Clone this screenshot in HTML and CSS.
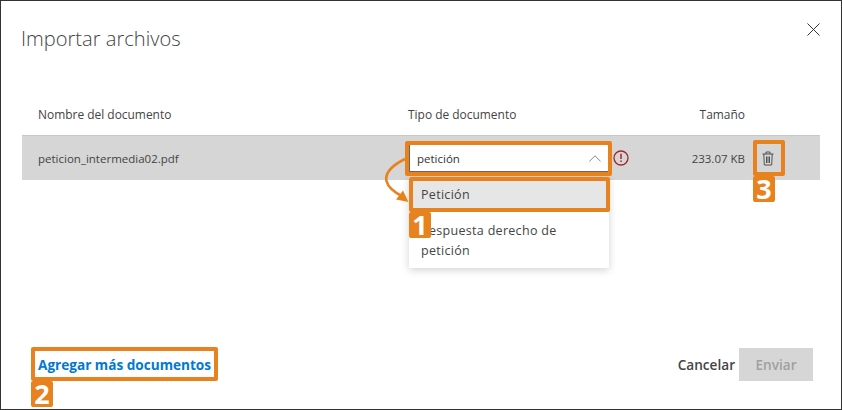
FILE: index.html
```html
<!DOCTYPE html>
<html lang="es">
<head>
<meta charset="utf-8">
<title>Importar archivos</title>
<link rel="stylesheet" href="styles.css">
</head>
<body>
<div class="dialog">
  <header class="head">
    <h1 class="title">Importar archivos</h1>
    <button class="close" aria-label="Cerrar">
      <svg width="13" height="13" viewBox="0 0 13 13"><path d="M.5.5l12 12M12.5.5l-12 12" stroke="#333" stroke-width="1" fill="none"/></svg>
    </button>
  </header>
  <div class="table">
    <div class="cols thead">
      <div class="c-name">Nombre del documento</div>
      <div class="c-type">Tipo de documento</div>
      <div class="c-size">Tamaño</div>
      <div class="c-act"></div>
    </div>
    <div class="cols row">
      <div class="c-name">peticion_intermedia02.pdf</div>
      <div class="c-type type-cell">
        <div class="select">
          <span>petición</span>
          <svg width="12" height="7" viewBox="0 0 12 7"><path d="M.3 6.500L6 .8l5.700 5.700" stroke="#888" fill="none"/></svg>
        </div>
        <svg class="err" width="16" height="16" viewBox="0 0 16 16"><circle cx="8" cy="8" r="7" stroke="#a4262c" stroke-width="1.300" fill="none"/><path d="M8 3.800v5.200" stroke="#a4262c" stroke-width="1.500"/><path d="M8 10.400v1.600" stroke="#a4262c" stroke-width="1.500"/></svg>
        <ul class="menu">
          <li class="opt active">Petición</li>
          <li class="opt">Respuesta derecho de petición</li>
        </ul>
      </div>
      <div class="c-size">233.07 KB</div>
      <div class="c-act">
        <svg width="12" height="15" viewBox="0 0 12 15"><path d="M.5 3h11M4 3V1h4v2M1.800 3l.5 11h7.400l.5-11M4.500 5.500v6.500M6 5.500v6.500M7.500 5.500v6.500" stroke="#444" stroke-width=".9" fill="none"/></svg>
      </div>
    </div>
  </div>
  <footer class="foot">
    <a class="add" href="#">Agregar más documentos</a>
    <div class="actions">
      <button class="cancel">Cancelar</button>
      <button class="send" disabled>Enviar</button>
    </div>
  </footer>

  <div class="mark m-select"></div>
  <div class="mark m-option"></div>
  <div class="mark m-trash"></div>
  <div class="mark m-add"></div>
  <div class="badge b-1">1</div>
  <div class="badge b-2">2</div>
  <div class="badge b-3">3</div>
  <svg class="arrow" width="34" height="50" viewBox="0 0 34 50"><path d="M22 3C8 10 2 18 3.500 25c1.500 7 9 12 17 16" stroke="#e8821e" stroke-width="2.600" fill="none"/><path d="M13 43.500L25.500 46 20 34.500z" fill="#e8821e"/></svg>
</div>
</body>
</html>
```
FILE: styles.css
```css
* { box-sizing: border-box; }
html, body { margin: 0; padding: 0; }
body {
  width: 842px;
  height: 410px;
  font-family: "Open Sans", "Liberation Sans", sans-serif;
  color: #333;
  overflow: hidden;
}
.dialog {
  position: relative;
  width: 842px;
  height: 410px;
  border: 1px solid #333;
  background: #fff;
  display: flex;
  flex-direction: column;
}
.head {
  display: flex;
  justify-content: space-between;
  padding: 22px 21px 0 20px;
  height: 102px;
}
.title {
  margin: 0;
  font-size: 20.100px;
  font-weight: 300;
  line-height: 32px;
  color: #444;
}
.close {
  border: 0;
  background: none;
  padding: 0;
  height: 13px;
  line-height: 0;
}
.table { margin: 0 21px; }
.cols {
  display: grid;
  grid-template-columns: 370px 262px 75px 1fr;
  padding-left: 16px;
  font-size: 11.500px;
  align-items: center;
}
.thead {
  height: 33px;
  font-weight: 500;
  color: #444;
  font-size: 11.950px;
  border-bottom: 1px solid #c8c8c8;
  padding-bottom: 9px;
}
.row {
  height: 44px;
  background: #d6d6d6;
  color: #444;
}
.c-size { text-align: right; }
.c-act { display: flex; justify-content: flex-end; padding-right: 46px; line-height: 0; }
.type-cell {
  position: relative;
  display: flex;
  align-items: center;
  gap: 4px;
}
.select {
  width: 200px;
  height: 28px;
  margin-left: 1px;
  background: #fff;
  border: 1px solid #666;
  display: flex;
  align-items: center;
  justify-content: space-between;
  padding: 0 7px 0 7px;
  color: #333;
}
.menu {
  position: absolute;
  left: 1px;
  top: 33px;
  width: 200px;
  margin: 0;
  padding: 0;
  list-style: none;
  background: #fff;
  box-shadow: 0 2px 8px rgba(0,0,0,.18);
  font-size: 12.500px;
  line-height: 20px;
  letter-spacing: .3px;
  color: #444;
}
.opt.active { background: #e6e6e6; padding: 8px 12px 7px; }
.opt:not(.active) { padding: 9px 12px 7px; }
.foot {
  margin-top: auto;
  display: flex;
  justify-content: space-between;
  align-items: center;
  padding: 0 28px 28px 37px;
  height: 61px;
}
.add {
  font-size: 13.600px;
  font-weight: 700;
  color: #0078d4;
  text-decoration: none;
}
.actions { display: flex; align-items: center; gap: 4px; }
.actions button {
  font-family: inherit;
  font-size: 13.600px;
  font-weight: 600;
  border: 0;
  padding: 0;
  height: 33px;
}
.cancel { background: none; color: #444; }
.send { width: 74px; background: #d6d6d6; color: #a0a0a0; }
.mark {
  position: absolute;
  border: 4px solid #e8821e;
  border-radius: 2px;
}
.m-select { left: 404px; top: 140px; width: 207px; height: 35px; }
.m-option { left: 408px; top: 176px; width: 201px; height: 35px; }
.m-trash { left: 752px; top: 139px; width: 32px; height: 36px; }
.m-add { left: 30px; top: 346px; width: 187px; height: 34px; }
.badge {
  position: absolute;
  width: 22px;
  height: 26px;
  background: #e8821e;
  border-radius: 2px;
  color: #fff;
  font-size: 27px;
  font-weight: 700;
  line-height: 25px;
  text-align: center;
}
.b-1 { left: 408px; top: 211px; }
.b-2 { left: 30px; top: 380px; }
.b-3 { left: 752px; top: 175px; }
.arrow { position: absolute; left: 382px; top: 155px; }
```
